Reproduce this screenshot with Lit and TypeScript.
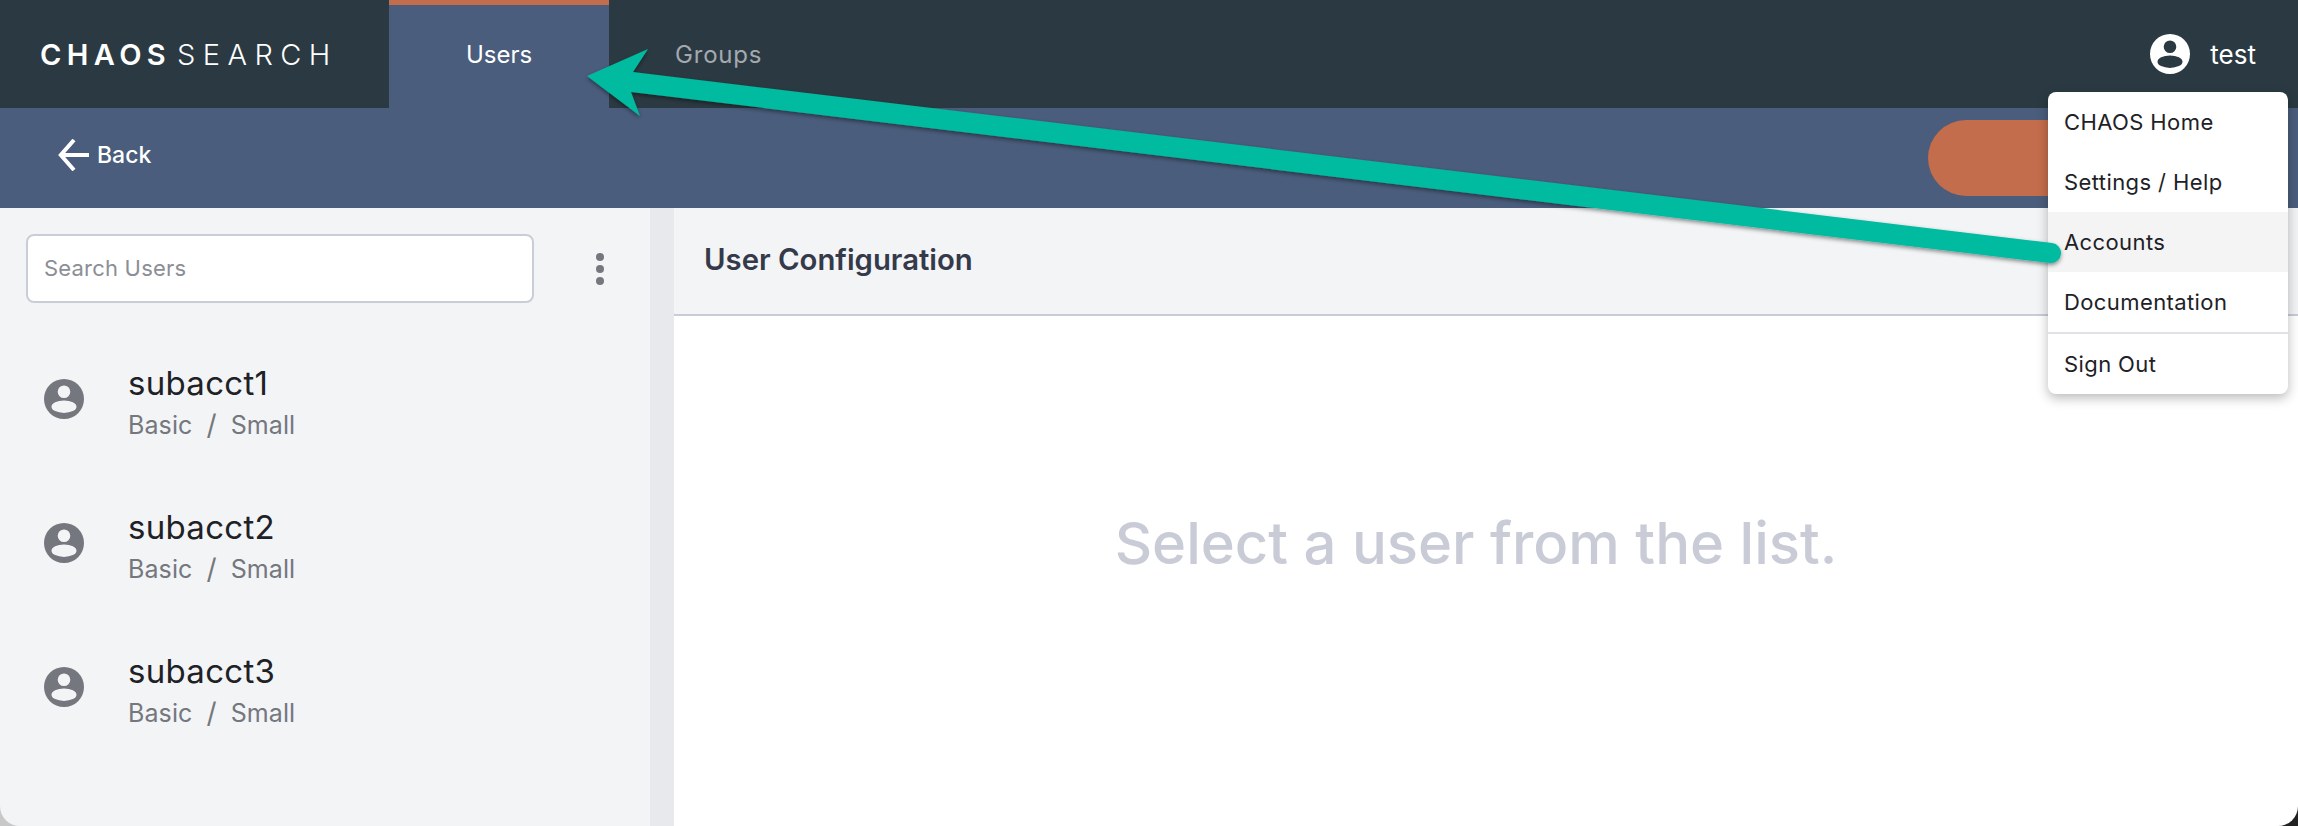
import { LitElement, css, html, svg } from 'lit';
import { customElement } from 'lit/decorators.js';

const USERS = ['subacct1', 'subacct2', 'subacct3'];
const MENU = ['CHAOS Home', 'Settings / Help', 'Accounts', 'Documentation'];

const userIcon = svg`<path fill-rule="evenodd" d="M20 0a20 20 0 1 0 0 40a20 20 0 1 0 0-40zM20 6.5a6.3 6.3 0 1 0 0 12.6a6.3 6.3 0 1 0 0-12.6zM20 21.5a12.5 6.2 0 1 0 0 12.4a12.5 6.2 0 1 0 0-12.4z"/>`;

@customElement('app-root')
export class AppRoot extends LitElement {
  static styles = css`
    :host {
      display: block;
      position: relative;
      width: 2298px;
      height: 826px;
      overflow: hidden;
      background: linear-gradient(90deg, #c8c8c8 50%, #222222 50%);
      font-family: 'Inter', 'Open Sans', sans-serif;
    }

    .topbar {
      display: flex;
      align-items: stretch;
      height: 108px;
      background: #2b3a42;
    }

    .logo {
      display: flex;
      align-items: center;
      width: 349px;
      padding-left: 40px;
      font-size: 29px;
      color: #ffffff;
      white-space: nowrap;
    }

    .logo b {
      font-weight: 600;
      letter-spacing: 5.4px;
    }

    .logo span {
      font-weight: 300;
      letter-spacing: 7.4px;
      margin-left: 6px;
    }

    .tab {
      display: flex;
      align-items: center;
      justify-content: center;
      width: 220px;
      font-size: 24px;
      color: #ffffff;
    }

    .tab.active {
      box-sizing: border-box;
      background: #4a5d7c;
      border-top: 5px solid #c46d4c;
      padding-bottom: 5px;
    }

    .tab.muted {
      width: auto;
      padding-left: 66px;
      letter-spacing: 0.8px;
      color: #a4a9b0;
    }

    .account {
      display: flex;
      align-items: center;
      gap: 20px;
      margin-left: auto;
      padding-right: 42px;
      font-size: 26px;
      color: #ffffff;
    }

    .account svg {
      width: 40px;
      height: 40px;
      fill: #ffffff;
    }

    .subbar {
      display: flex;
      align-items: center;
      justify-content: space-between;
      box-sizing: border-box;
      height: 100px;
      padding: 12px 0 0 58px;
      background: #4a5d7c;
    }

    .back {
      display: flex;
      align-items: center;
      gap: 7px;
      margin-top: -18px;
      font-size: 23px;
      font-weight: 500;
      color: #ffffff;
    }

    .back svg {
      width: 32px;
      height: 32px;
    }

    .pill {
      width: 340px;
      height: 76px;
      margin-right: 30px;
      margin-top: -12px;
      border-radius: 38px;
      background: #c46d4c;
    }

    .main {
      display: flex;
      height: 618px;
    }

    .side {
      box-sizing: border-box;
      width: 650px;
      height: 100%;
      padding: 26px 0 0 26px;
      background: #f3f4f6;
      border-bottom-left-radius: 20px;
    }

    .search-row {
      display: flex;
      align-items: center;
    }

    .search {
      display: flex;
      align-items: center;
      box-sizing: border-box;
      width: 508px;
      height: 69px;
      padding: 0 0 2px 16px;
      border: 2px solid #c9cdd6;
      border-radius: 8px;
      background: #ffffff;
      font-size: 22px;
      letter-spacing: 0.2px;
      color: #8b8e95;
    }

    .dots {
      display: flex;
      flex-direction: column;
      gap: 4px;
      margin-left: 62px;
    }

    .dots i {
      width: 8px;
      height: 8px;
      border-radius: 50%;
      background: #74777d;
    }

    .users {
      display: flex;
      flex-direction: column;
      gap: 44px;
      margin-top: 47px;
    }

    .user {
      display: flex;
      align-items: center;
      height: 100px;
      gap: 44px;
      padding-left: 18px;
    }

    .user svg {
      flex: none;
      width: 40px;
      height: 40px;
      margin-top: -2px;
      fill: #74777d;
    }

    .user-text {
      padding-top: 4px;
    }

    .user-name {
      font-size: 33px;
      line-height: 40px;
      letter-spacing: 0.3px;
      color: #1e2126;
    }

    .user-plan {
      display: flex;
      gap: 14px;
      margin-top: 5px;
      font-size: 25px;
      line-height: 34px;
      letter-spacing: 0.1px;
      color: #74777d;
    }

    .user-plan .sep {
      font-size: 28px;
    }

    .divider {
      width: 24px;
      background: #e8e9ec;
    }

    .content {
      display: flex;
      flex: 1;
      flex-direction: column;
      border-bottom-right-radius: 20px;
      background: #ffffff;
    }

    .content-head {
      display: flex;
      align-items: center;
      box-sizing: border-box;
      height: 108px;
      padding: 0 0 3px 30px;
      background: #f3f4f6;
      border-bottom: 2px solid #c8ccd6;
      font-size: 29.3px;
      font-weight: 600;
      color: #353a4a;
    }

    .empty {
      padding-top: 192px;
      padding-right: 20px;
      text-align: center;
      font-size: 58px;
      line-height: 70px;
      font-weight: 500;
      color: #c9ccd6;
    }

    .menu {
      position: absolute;
      top: 92px;
      left: 2048px;
      box-sizing: border-box;
      width: 240px;
      height: 302px;
      border-radius: 8px;
      background: #ffffff;
      box-shadow: 0 4px 12px rgba(0, 0, 0, 0.28);
      overflow: hidden;
      font-size: 22px;
      letter-spacing: 0.4px;
      color: #1e2126;
    }

    .menu div {
      display: flex;
      align-items: center;
      height: 60px;
      padding-left: 16px;
    }

    .menu .hover {
      background: #f4f4f5;
    }

    .menu .sign-out {
      border-top: 2px solid #e0e2e7;
    }

    .arrow {
      position: absolute;
      inset: 0;
      width: 2298px;
      height: 826px;
      pointer-events: none;
    }
  `;

  render() {
    return html`
      <div class="topbar">
        <div class="logo"><b>CHAOS</b><span>SEARCH</span></div>
        <div class="tab active">Users</div>
        <div class="tab muted">Groups</div>
        <div class="account">
          <svg viewBox="0 0 40 40">${userIcon}</svg>
          <span>test</span>
        </div>
      </div>
      <div class="subbar">
        <div class="back">
          <svg viewBox="0 0 32 32" fill="none" stroke="#fff" stroke-width="4"><path d="M31 16H3M16 1L2.8 16l13.2 15" /></svg>
          <span>Back</span>
        </div>
        <div class="pill"></div>
      </div>
      <div class="main">
        <div class="side">
          <div class="search-row">
            <div class="search">Search Users</div>
            <div class="dots"><i></i><i></i><i></i></div>
          </div>
          <div class="users">
            ${USERS.map(
              (name) => html`
                <div class="user">
                  <svg viewBox="0 0 40 40">${userIcon}</svg>
                  <div class="user-text">
                    <div class="user-name">${name}</div>
                    <div class="user-plan"><span>Basic</span><span class="sep">/</span><span>Small</span></div>
                  </div>
                </div>
              `,
            )}
          </div>
        </div>
        <div class="divider"></div>
        <div class="content">
          <div class="content-head">User Configuration</div>
          <div class="empty">Select a user from the list.</div>
        </div>
      </div>
      <div class="menu">
        ${MENU.map((item) => html`<div class=${item === 'Accounts' ? 'hover' : ''}>${item}</div>`)}
        <div class="sign-out">Sign Out</div>
      </div>
      <svg class="arrow" viewBox="0 0 2298 826">
        <defs>
          <filter id="arrow-shadow" x="-5%" y="-50%" width="110%" height="200%">
            <feDropShadow dx="0" dy="2" stdDeviation="2" flood-color="#000" flood-opacity="0.45" />
          </filter>
        </defs>
        <path
          fill="#00bba0"
          filter="url(#arrow-shadow)"
          d="M587 76L648 49L633 72L2052 243A10 10 0 0 1 2050 263L631 92L640 116Z"
        />
      </svg>
    `;
  }
}
